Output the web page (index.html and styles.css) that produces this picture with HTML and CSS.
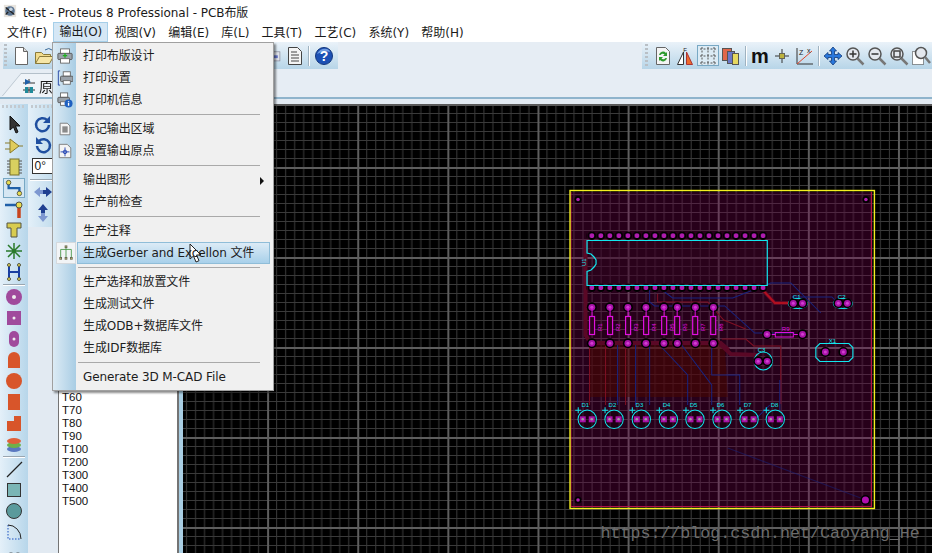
FILE: index.html
```html
<!DOCTYPE html>
<html lang="zh">
<head>
<meta charset="utf-8">
<title>test - Proteus 8 Professional - PCB布版</title>
<link rel="stylesheet" href="styles.css">
</head>
<body>
<div class="app">
  <header class="titlebar">
    <svg class="app-icon" viewBox="0 0 16 16"><rect x="1" y="1" width="14" height="14" fill="#e8e4de"/><circle cx="8" cy="8" r="5.500" fill="#5a7390"/><path d="M3 4l10 8M3 12l3-3" stroke="#222" stroke-width="1.500"/><circle cx="9" cy="6" r="2" fill="#c5d3e0"/></svg>
    <span>test - Proteus 8 Professional - PCB布版</span>
  </header>
  <nav class="menubar">
    <span class="menu-item">文件(F)</span>
    <span class="menu-item is-open">输出(O)</span>
    <span class="menu-item">视图(V)</span>
    <span class="menu-item">编辑(E)</span>
    <span class="menu-item">库(L)</span>
    <span class="menu-item">工具(T)</span>
    <span class="menu-item">工艺(C)</span>
    <span class="menu-item">系统(Y)</span>
    <span class="menu-item">帮助(H)</span>
  </nav>
  <div class="toolrow">
    <div class="toolbar toolbar-file">
      <i class="grip"></i>
      <svg class="tool" viewBox="0 0 20 20"><path d="M4.500 1.500h8l4 4v13h-12z" fill="#fff" stroke="#666"/><path d="M12.500 1.500v4h4" fill="#ddd" stroke="#666"/></svg>
      <svg class="tool" viewBox="0 0 20 20"><path d="M1.500 17.500v-11h6l2 2h7v2" fill="#f2dc8c" stroke="#8a7a3a"/><path d="M1.500 17.500l4-7h14l-4 7z" fill="#f6e6a6" stroke="#8a7a3a"/><path d="M11 4q4-3 7 0" fill="none" stroke="#3a6a9a"/></svg>
      <span class="spacer"></span>
      <svg class="tool tool-narrow" viewBox="0 0 20 20"><rect x="3" y="4" width="14" height="13" fill="#dfe3ea" stroke="#889"/><rect x="6" y="9" width="8" height="4" fill="#6677cc"/></svg>
      <svg class="tool" viewBox="0 0 20 20"><path d="M3.500 1.500h9l4 4v13h-13z" fill="#f4f4f4" stroke="#444"/><path d="M6 6h6M6 9h8M6 12h8M6 15h8" stroke="#444"/></svg>
      <i class="vsep"></i>
      <svg class="tool tool-help" viewBox="0 0 20 20"><circle cx="10" cy="10" r="8.500" fill="#1c50b4" stroke="#12367c"/><path d="M3 8q3-6 10-5 3 1 3 3-6-2-13 2z" fill="#6f9be0"/><text x="10" y="15" class="help-mark">?</text></svg>
    </div>
    <div class="toolbar toolbar-view">
      <i class="grip"></i>
      <svg class="tool" viewBox="0 0 20 20"><path d="M3.500 1.500h9l4 4v13h-13z" fill="#f4f4f4" stroke="#666"/><path d="M6 9a4 4 0 0 1 7-2l1-1v4h-4l1.500-1.500a2.500 2.500 0 0 0-4 .5zM14 12a4 4 0 0 1-7 2l-1 1v-4h4l-1.500 1.500a2.500 2.500 0 0 0 4-.5z" fill="#2e9a2e"/></svg>
      <svg class="tool" viewBox="0 0 20 20"><path d="M8.500 6v12.500h-6z" fill="#fff" stroke="#333"/><path d="M11.500 6v12.500h6z" fill="#ee6a2c" stroke="#a33"/><text x="10" y="6" class="flip-mark">F</text></svg>
      <span class="tool-active"><svg class="tool" viewBox="0 0 20 20"><path d="M2 3h16M2 10h16M2 17h16M4 1v18M10 1v18M16 1v18" stroke="#555" stroke-dasharray="2 1.500"/></svg></span>
      <svg class="tool" viewBox="0 0 20 20"><rect x="1.500" y="2.500" width="9" height="12" fill="#e0664a" stroke="#555"/><rect x="6.500" y="5.500" width="7" height="12" fill="#6c78c8" stroke="#555"/><rect x="11.500" y="7.500" width="6" height="11" fill="#e6d860" stroke="#555"/></svg>
      <i class="vsep"></i>
      <span class="tool-m">m</span>
      <svg class="tool" viewBox="0 0 20 20"><path d="M3 10h14M10 3v14" stroke="#333"/><rect x="7.500" y="7.500" width="5" height="5" fill="#bcb23e" stroke="#665"/></svg>
      <svg class="tool" viewBox="0 0 20 20"><path d="M3 2v16h16" fill="none" stroke="#333"/><path d="M3 18L18 5" stroke="#e0452a"/><text x="5" y="9" class="axis-mark">Z</text><text x="13" y="7" class="axis-mark">x</text></svg>
      <i class="vsep"></i>
      <svg class="tool" viewBox="0 0 20 20"><path d="M10 1l3.500 4H11.500v3.500H15V6.500l4 3.500-4 3.500v-2h-3.500V15h2L10 19l-3.500-4h2v-3.500H5v2L1 10l4-3.500v2h3.500V5h-2z" fill="#2a78dc" stroke="#123a78" stroke-width=".8"/></svg>
      <svg class="tool" viewBox="0 0 20 20"><circle cx="8" cy="8" r="6" fill="#e4e8ee" stroke="#555" stroke-width="1.500"/><path d="M12.500 12.500l6 6" stroke="#777" stroke-width="2.500"/><path d="M4.500 8h7M8 4.500v7" stroke="#333" stroke-width="1.500"/></svg>
      <svg class="tool" viewBox="0 0 20 20"><circle cx="8" cy="8" r="6" fill="#e4e8ee" stroke="#555" stroke-width="1.500"/><path d="M12.500 12.500l6 6" stroke="#777" stroke-width="2.500"/><path d="M4.500 8h7" stroke="#333" stroke-width="1.500"/></svg>
      <svg class="tool" viewBox="0 0 20 20"><circle cx="8" cy="8" r="6" fill="#e4e8ee" stroke="#555" stroke-width="1.500"/><path d="M12.500 12.500l6 6" stroke="#777" stroke-width="2.500"/><rect x="5" y="5" width="6" height="6" fill="none" stroke="#444" stroke-width="1.500"/></svg>
      <svg class="tool" viewBox="0 0 20 20"><rect x="1.500" y="5.500" width="11" height="13" fill="#fff" stroke="#333" stroke-dasharray="1 1"/><circle cx="10" cy="7" r="5.500" fill="#e4e8ee" stroke="#555" stroke-width="1.500"/><path d="M14 11l5 6" stroke="#777" stroke-width="2.500"/></svg>
    </div>
  </div>
  <div class="tabrow">
    <div class="tab-wrap">
      <div class="tab">
        <svg class="tab-icon" viewBox="0 0 14 16"><path d="M1 5h12M7 1v3M1 12h12M7 9v6" stroke="#333"/><path d="M3 1l6 3-6 3z" fill="#1f5fa8"/><rect x="3" y="9" width="3" height="6" fill="#1f8a9a"/><rect x="8" y="9" width="3" height="6" fill="#1f8a9a"/></svg>
        <span>原理图</span>
      </div>
    </div>
  </div>
  <main class="workspace">
    <aside class="mode-bar">
      <i class="grip-h"></i>
      <svg class="mode" viewBox="0 0 20 20"><path d="M6 1v14l3.500-3 2.500 6 2-1-2.500-6H16z" fill="#333" stroke="#111"/></svg>
      <svg class="mode" viewBox="0 0 20 20"><path d="M6 3v14l9-7z" fill="#e0cc5c" stroke="#887a2a"/><path d="M1 7h5M1 13h5M15 10h4" stroke="#887a2a"/></svg>
      <svg class="mode" viewBox="0 0 20 20"><rect x="6" y="2" width="9" height="16" fill="#d8d060" stroke="#77702a"/><path d="M3 4h3M3 7h3M3 10h3M3 13h3M3 16h3M15 4h3M15 7h3M15 10h3M15 13h3M15 16h3" stroke="#555"/></svg>
      <span class="mode-active"><svg class="mode" viewBox="0 0 20 20"><path d="M4 4v6h12v6" fill="none" stroke="#1f5fa8" stroke-width="2.500"/><circle cx="4" cy="4" r="2.500" fill="#e8dc50" stroke="#554"/><circle cx="16" cy="16" r="2.500" fill="#e8dc50" stroke="#554"/></svg></span>
      <svg class="mode" viewBox="0 0 20 20"><path d="M1 6h12" stroke="#1f5fa8" stroke-width="2.500"/><path d="M15 8v11" stroke="#c8441e" stroke-width="3.500"/><circle cx="15" cy="6" r="3" fill="#e8dc50" stroke="#554"/></svg>
      <svg class="mode" viewBox="0 0 20 20"><path d="M3 3h14v5h-4v9H7V8H3z" fill="#d8cc50" stroke="#554"/></svg>
      <svg class="mode" viewBox="0 0 20 20"><path d="M10 2v16M2 10h16M4 4l12 12M16 4L4 16" stroke="#2a7a2a" stroke-width="1.500"/></svg>
      <svg class="mode" viewBox="0 0 20 20"><path d="M5 4v12M15 4v12M5 10h10" stroke="#1a3fa0" stroke-width="2"/><circle cx="5" cy="3" r="1.500" fill="#e8dc50" stroke="#554"/><circle cx="15" cy="3" r="1.500" fill="#e8dc50" stroke="#554"/><circle cx="5" cy="17" r="1.500" fill="#e8dc50" stroke="#554"/><circle cx="15" cy="17" r="1.500" fill="#e8dc50" stroke="#554"/></svg>
      <i class="hsep"></i>
      <svg class="mode" viewBox="0 0 20 20"><circle cx="10" cy="10" r="8" fill="#a04a9c"/><circle cx="10" cy="10" r="2" fill="#eee"/></svg>
      <svg class="mode" viewBox="0 0 20 20"><rect x="3" y="3" width="14" height="14" fill="#a04a9c"/><circle cx="10" cy="10" r="1.500" fill="#eee"/></svg>
      <svg class="mode" viewBox="0 0 20 20"><rect x="5" y="2" width="10" height="16" rx="5" fill="#a04a9c"/><circle cx="10" cy="10" r="1.500" fill="#eee"/></svg>
      <svg class="mode" viewBox="0 0 20 20"><path d="M4 18V8a6 6 0 0 1 12 0v10z" fill="#d8552a"/></svg>
      <svg class="mode" viewBox="0 0 20 20"><circle cx="10" cy="10" r="8" fill="#d8552a"/></svg>
      <svg class="mode" viewBox="0 0 20 20"><rect x="4" y="2" width="12" height="16" fill="#d8552a"/></svg>
      <svg class="mode" viewBox="0 0 20 20"><path d="M3 18V8h7V3h7v15z" fill="#d8552a"/></svg>
      <svg class="mode" viewBox="0 0 20 20"><ellipse cx="10" cy="15" rx="7" ry="3" fill="#5a78c0"/><ellipse cx="10" cy="11" rx="7" ry="3" fill="#6fb04a"/><ellipse cx="10" cy="7" rx="7" ry="3" fill="#e0603a"/></svg>
      <i class="hsep"></i>
      <svg class="mode" viewBox="0 0 20 20"><path d="M3 18L18 3" stroke="#222" stroke-width="1.200"/></svg>
      <svg class="mode" viewBox="0 0 20 20"><rect x="3.500" y="3.500" width="13" height="13" fill="#7ab5b5" stroke="#333"/></svg>
      <svg class="mode" viewBox="0 0 20 20"><circle cx="10" cy="10" r="7.500" fill="#5a9a9c" stroke="#333"/></svg>
      <svg class="mode" viewBox="0 0 20 20"><path d="M4 3v14h13" fill="none" stroke="#1a4fc0" stroke-dasharray="1.500 1.500"/><path d="M4 3a13 14 0 0 1 13 14" fill="none" stroke="#222"/></svg>
      <svg class="mode" viewBox="0 0 20 20"><path d="M3 18q-2-8 4-8 3 0 3 2 1-2 4-2 5 0 3 8z" fill="#5a9a9c" stroke="#333"/></svg>
    </aside>
    <aside class="side-panel">
      <div class="orient-bar">
        <i class="grip-h"></i>
        <svg class="mode" viewBox="0 0 20 20"><path d="M16 10a6.500 6.500 0 1 1-2-5" fill="none" stroke="#1f4fa0" stroke-width="2.500"/><path d="M17 1v7h-7z" fill="#1f4fa0"/></svg>
        <svg class="mode" viewBox="0 0 20 20"><path d="M4 10a6.500 6.500 0 1 0 2-5" fill="none" stroke="#1f4fa0" stroke-width="2.500"/><path d="M3 1v7h7z" fill="#1f4fa0"/></svg>
        <div class="angle">0°</div>
        <i class="hsep hsep-wide"></i>
        <svg class="mode" viewBox="0 0 20 20"><path d="M1 10l6-5v3h3v4H7v3z" fill="#7d97d0"/><path d="M19 10l-6-5v3h-3v4h3v3z" fill="#1f3f90"/></svg>
        <svg class="mode" viewBox="0 0 20 20"><path d="M10 1l-5 6h3v3h4V7h3z" fill="#1f3f90"/><path d="M10 19l-5-6h3v-3h4v3h3z" fill="#7d97d0"/></svg>
      </div>
      <ul class="list">
        <li>T60</li><li>T70</li><li>T80</li><li>T90</li><li>T100</li><li>T200</li><li>T300</li><li>T400</li><li>T500</li>
      </ul>
    </aside>
    <svg class="canvas" viewBox="184 104 748 449" preserveAspectRatio="none">
      <defs>
        <pattern id="grid" patternUnits="userSpaceOnUse" x="628" y="437" width="90" height="90">
          <path d="M.500 0v90M9.500 0v90M18.500 0v90M27.500 0v90M36.500 0v90M45.500 0v90M54.500 0v90M63.500 0v90M72.500 0v90M81.500 0v90M0 .500h90M0 9.500h90M0 18.500h90M0 27.500h90M0 36.500h90M0 45.500h90M0 54.500h90M0 63.500h90M0 72.500h90M0 81.500h90" stroke="#3a3a3a" fill="none"/>
          <path d="M1 0v90M0 1h90" stroke="#5e5e5e" stroke-width="2" fill="none"/>
        </pattern>
        <pattern id="padrow" patternUnits="userSpaceOnUse" x="587.300" y="229" width="9" height="13">
          <circle cx="5" cy="6.700" r="4.200" fill="#000"/><circle cx="5" cy="6.700" r="2.400" fill="#b01cb0"/>
        </pattern>
        <g id="pad"><circle r="5" fill="#000"/><circle r="3.400" fill="#a812a8"/><circle r="1.500" fill="#d040d0"/></g>
        <g id="res"><path d="M0-9v27" stroke="#e010e0"/><rect x="-2.500" y="0" width="5" height="18" fill="#30041f" stroke="#e010e0" stroke-width="1.200"/></g>
        <g id="led">
          <circle r="9.200" fill="#000" fill-opacity=".25" stroke="#12e6ee"/>
          <path d="M-12-9h6M-9-12v6" stroke="#12e6ee"/>
          <rect x="-7.500" y="-3" width="6" height="6" fill="#a812a8"/><rect x="1.500" y="-3" width="6" height="6" fill="#a812a8"/>
          <circle cx="-4.500" r="1.300" fill="#a0a0a0"/><circle cx="4.500" r="1.300" fill="#a0a0a0"/>
        </g>
      </defs>
      <rect x="184" y="104" width="748" height="449" fill="#000"/>
      <rect x="184" y="104" width="748" height="449" fill="url(#grid)"/>
      <rect x="184" y="104" width="748" height="2" fill="#5a5a5a"/>
      <rect x="572" y="192" width="300" height="315" fill="#7a0050" fill-opacity=".32"/>
      <path d="M590 345h135l3 52H590z" fill="#4a0800" fill-opacity=".55"/>
      <path d="M572 506.500h300M571.500 192v315" stroke="#b0104a" fill="none"/>
      <path d="M871.500 192v315" stroke="#c0104a"/>
      <rect x="570.500" y="190.500" width="304" height="318" fill="none" stroke="#f4f020" stroke-width="1.400"/>
      <g fill="none" stroke="#5a0826" stroke-width="4">
        <path d="M586 240v95l5 8h130l8 7"/>
        <path d="M763 290l12 13h18"/>
        <path d="M716 340l15 14 28 1"/>
      </g>
      <g fill="none" stroke="#b01020" stroke-width="2">
        <path d="M763 290l12 13h18"/>
      </g>
      <g fill="none" stroke="#801024" stroke-width="1">
        <path d="M658 294v8h50l16 18 22 9"/>
        <path d="M722 339h24l8 7h27v58"/>
        <path d="M590 345v60M606 345v60M626 345v60"/>
      </g>
      <g fill="none" stroke="#182480" stroke-width="1">
        <path d="M650 290v12l5 4h70l30 27h40"/>
        <path d="M665 292l8 6h60l38-15h20l30 30"/>
        <path d="M618 345v60M636 345v60M650 345v60M660 345l28 30v30M682 345l30 40v20M712 345v30h28v30"/>
        <path d="M770 405l-14 14M780 380v30M792 297h40l10 10"/>
        <path d="M728 448L866 500" stroke-opacity=".5"/>
      </g>
      <rect x="587" y="229" width="180" height="13" fill="url(#padrow)"/>
      <rect x="587" y="283" width="180" height="13" fill="url(#padrow)"/>
      <path d="M587.500 253v-12.500h180v45h-180V271.500l4-1.500 3-3 2-3v-4l-2-3-3-3-4-1z" fill="#30041f" fill-opacity=".4" stroke="#12e6ee" stroke-width="1.200"/>
      <text class="lbl lbl-cyan" transform="translate(586 266) rotate(-90)">U1</text>
      <g>
        <use href="#pad" x="592.300" y="307.300"/><use href="#pad" x="610.300" y="307.300"/><use href="#pad" x="628.300" y="307.300"/><use href="#pad" x="646.300" y="307.300"/><use href="#pad" x="664.300" y="307.300"/><use href="#pad" x="677.700" y="307.300"/><use href="#pad" x="695.700" y="307.300"/><use href="#pad" x="713.700" y="307.300"/>
        <use href="#pad" x="592.300" y="343.300"/><use href="#pad" x="610.300" y="343.300"/><use href="#pad" x="628.300" y="343.300"/><use href="#pad" x="646.300" y="343.300"/><use href="#pad" x="664.300" y="343.300"/><use href="#pad" x="677.700" y="343.300"/><use href="#pad" x="695.700" y="343.300"/><use href="#pad" x="713.700" y="343.300"/>
        <use href="#res" x="592.500" y="316.500"/><use href="#res" x="610.500" y="316.500"/><use href="#res" x="628.500" y="316.500"/><use href="#res" x="646.500" y="316.500"/><use href="#res" x="664.500" y="316.500"/><use href="#res" x="677.500" y="316.500"/><use href="#res" x="695.500" y="316.500"/><use href="#res" x="713.500" y="316.500"/>
      </g>
      <text class="lbl lbl-magenta" transform="translate(602 331) rotate(-90)">R1</text>
      <text class="lbl lbl-magenta" transform="translate(620 331) rotate(-90)">R2</text>
      <text class="lbl lbl-magenta" transform="translate(638 331) rotate(-90)">R3</text>
      <text class="lbl lbl-magenta" transform="translate(656 331) rotate(-90)">R4</text>
      <text class="lbl lbl-magenta" transform="translate(674 331) rotate(-90)">R5</text>
      <text class="lbl lbl-magenta" transform="translate(687 331) rotate(-90)">R6</text>
      <text class="lbl lbl-magenta" transform="translate(705 331) rotate(-90)">R7</text>
      <text class="lbl lbl-magenta" transform="translate(723 331) rotate(-90)">R8</text>
      <use href="#pad" x="767.300" y="334.300"/><use href="#pad" x="802.700" y="334.300"/>
      <path d="M772 334.500h3.500M794 334.500h4" stroke="#e010e0"/>
      <rect x="775.500" y="332.500" width="18" height="4.500" fill="none" stroke="#e010e0"/>
      <text class="lbl lbl-magenta" x="782" y="331">R9</text>
      <g fill="none" stroke="#12e6ee" stroke-width="1.100">
        <ellipse cx="798" cy="303.500" rx="9.500" ry="5"/>
        <ellipse cx="843" cy="303.500" rx="9.500" ry="5"/>
        <path d="M820 343.500h29l4 4v10l-4 4h-29l-4-4v-10z"/>
        <circle cx="763.500" cy="361" r="9"/>
      </g>
      <g>
        <use href="#pad" x="793.500" y="303.300"/><use href="#pad" x="802.700" y="303.300"/>
        <use href="#pad" x="838.500" y="303.300"/><use href="#pad" x="847.500" y="303.300"/>
        <use href="#pad" x="825.500" y="352"/><use href="#pad" x="843.500" y="352"/>
        <use href="#pad" x="758.500" y="361.300"/><use href="#pad" x="767.500" y="361.300"/>
      </g>
      <text class="lbl lbl-cyan" x="793" y="299">C1</text>
      <text class="lbl lbl-cyan" x="838" y="299">C2</text>
      <text class="lbl lbl-cyan" x="829" y="343">X1</text>
      <text class="lbl lbl-cyan" x="758" y="352">C3</text>
      <g>
        <use href="#led" x="587.700" y="419.300"/><use href="#led" x="614.500" y="419.300"/><use href="#led" x="641.700" y="419.300"/><use href="#led" x="668.700" y="419.300"/><use href="#led" x="695.300" y="419.300"/><use href="#led" x="722.300" y="419.300"/><use href="#led" x="749.300" y="419.300"/><use href="#led" x="775.500" y="419.300"/>
      </g>
      <text class="lbl lbl-cyan" x="582" y="407">D1</text><text class="lbl lbl-cyan" x="609" y="407">D2</text><text class="lbl lbl-cyan" x="636" y="407">D3</text><text class="lbl lbl-cyan" x="663" y="407">D4</text><text class="lbl lbl-cyan" x="690" y="407">D5</text><text class="lbl lbl-cyan" x="717" y="407">D6</text><text class="lbl lbl-cyan" x="744" y="407">D7</text><text class="lbl lbl-cyan" x="771" y="407">D8</text>
      <g>
        <circle cx="578.500" cy="199.500" r="3.500" fill="#000"/><circle cx="578.500" cy="199.500" r="1.800" fill="#b020b0"/>
        <circle cx="866" cy="199.500" r="3.500" fill="#000"/><circle cx="866" cy="199.500" r="1.800" fill="#b020b0"/>
        <circle cx="578.500" cy="500" r="3.500" fill="#000"/><circle cx="578.500" cy="500" r="1.800" fill="#b020b0"/>
        <circle cx="865.500" cy="500" r="5" fill="#000"/><circle cx="865.500" cy="500" r="3.500" fill="#b010b0"/>
      </g>
      <text class="watermark" x="601" y="538">https://blog.csdn.net/Caoyang_He</text>
    </svg>
  </main>

  <div class="dropdown">
    <div class="dd-row"><svg class="dd-icon" viewBox="0 0 18 18"><rect x="4" y="1" width="10" height="6" fill="#fff" stroke="#666"/><rect x="1" y="6" width="16" height="7" rx="1" fill="#9aa2aa" stroke="#555"/><rect x="4" y="12" width="10" height="5" fill="#fff" stroke="#666"/><path d="M9 6v5M6.500 8.500h5" stroke="#1cb01c" stroke-width="1.500"/></svg><span>打印布版设计</span></div>
    <div class="dd-row"><svg class="dd-icon" viewBox="0 0 18 18"><path d="M1.500 1v16M1.500 1h2M1.500 17h2" stroke="#1f3fa0" fill="none"/><rect x="7" y="2" width="8" height="5" fill="#fff" stroke="#666"/><rect x="4" y="7" width="14" height="6" rx="1" fill="#9aa2aa" stroke="#555"/><rect x="7" y="12" width="8" height="4" fill="#fff" stroke="#666"/></svg><span>打印设置</span></div>
    <div class="dd-row"><svg class="dd-icon" viewBox="0 0 18 18"><rect x="4" y="1" width="8" height="5" fill="#fff" stroke="#666"/><rect x="1" y="6" width="13" height="6" rx="1" fill="#9aa2aa" stroke="#555"/><rect x="4" y="11" width="8" height="4" fill="#fff" stroke="#666"/><circle cx="13" cy="13" r="4.500" fill="#1f60c0"/><path d="M13 12v3.500M13 10v1" stroke="#fff" stroke-width="1.500"/></svg><span>打印机信息</span></div>
    <i class="dd-sep"></i>
    <div class="dd-row"><svg class="dd-icon" viewBox="0 0 18 18"><path d="M3.500 2.500h8l3 3v10h-11z" fill="#f4f4f4" stroke="#777"/><rect x="6" y="6" width="6" height="7" fill="#8a8a8a"/></svg><span>标记输出区域</span></div>
    <div class="dd-row"><svg class="dd-icon" viewBox="0 0 18 18"><path d="M2.500 1.500h9l4 4v11h-13z" fill="#f4f4f4" stroke="#777"/><path d="M4 10h10M9 5v10" stroke="#1f3fb0"/><circle cx="9" cy="10" r="2" fill="none" stroke="#1f3fb0"/></svg><span>设置输出原点</span></div>
    <i class="dd-sep"></i>
    <div class="dd-row"><span>输出图形</span><i class="dd-arrow"></i></div>
    <div class="dd-row"><span>生产前检查</span></div>
    <i class="dd-sep"></i>
    <div class="dd-row"><span>生产注释</span></div>
    <div class="dd-row is-hot"><span class="dd-icon-box"><svg class="dd-icon" viewBox="0 0 18 18"><path d="M3 15V5h12v10M9 5v10M9 2v3" fill="none" stroke="#4a9a4a"/><rect x="2" y="14" width="2" height="2" fill="#d8d060" stroke="#665"/><rect x="8" y="14" width="2" height="2" fill="#d8d060" stroke="#665"/><rect x="14" y="14" width="2" height="2" fill="#d8d060" stroke="#665"/><rect x="8" y="1" width="2" height="2" fill="#d8d060" stroke="#665"/></svg></span><span>生成Gerber and Excellon 文件</span></div>
    <i class="dd-sep"></i>
    <div class="dd-row"><span>生产选择和放置文件</span></div>
    <div class="dd-row"><span>生成测试文件</span></div>
    <div class="dd-row"><span>生成ODB+数据库文件</span></div>
    <div class="dd-row"><span>生成IDF数据库</span></div>
    <i class="dd-sep"></i>
    <div class="dd-row"><span>Generate 3D M-CAD File</span></div>
  </div>
  <svg class="cursor" viewBox="0 0 12 20"><path d="M1 1v15l3.500-3 2.500 6 3-1.300-2.500-5.700H12z" fill="#fff" stroke="#222"/></svg>
</div>
</body>
</html>
```

FILE: styles.css
```css
* { box-sizing: border-box; }
html, body { margin: 0; height: 100%; overflow: hidden; background: #fff; }
.app {
  position: relative;
  width: 932px;
  height: 553px;
  display: flex;
  flex-direction: column;
  overflow: hidden;
  font: 12px "DejaVu Sans", "Noto Sans CJK SC", sans-serif;
  color: #1a1a1a;
}
i { display: block; font-style: normal; }

.titlebar { height: 22px; display: flex; align-items: center; gap: 6px; padding-left: 3px; background: #fff; letter-spacing: -.05px; }
.app-icon { width: 14px; height: 14px; flex: none; }

.menubar { height: 20px; display: flex; padding-left: .9px; background: #fff; }
.menu-item { padding: 0 6.100px; line-height: 20px; border: solid transparent; border-width: 1px 0; white-space: nowrap; }
.menu-item.is-open { background: #d5e7f5; border: 1px solid #a6cfe9; line-height: 18px; padding: 0 5.100px; }

.toolrow { height: 27px; display: flex; justify-content: space-between; background: #e6edf4; }
.toolbar {
  height: 27px;
  display: flex;
  align-items: center;
  background: linear-gradient(#eaf2f9, #b7d5e8);
}
.toolbar-file { margin-left: 3px; width: 335px; padding-left: 7px; gap: 3px; padding-right: 4px; }
.toolbar-view { width: 290px; padding-left: 1px; gap: 2px; }
.grip { width: 3px; height: 24px; margin: 0 3px 0 2px; background: repeating-linear-gradient(#b9bfc5 0 2px, transparent 2px 4px); flex: none; }
.toolbar-file .grip { margin: 0 1px 0 -6px; }
.tool { width: 20px; height: 20px; flex: none; }
.tool-narrow { width: 14px; }
.tool-help { margin-left: 1px; }
.spacer { flex: 1; }
.vsep { width: 1px; height: 20px; margin: 0 2px; background: #9fb2c0; box-shadow: 1px 0 #fff; flex: none; }
.toolbar-file .vsep { margin: 0 1px 0 0; }
.tool-active { width: 22px; height: 21px; display: flex; align-items: center; justify-content: center; background: #dcebf5; border: 1px solid #78a8c4; flex: none; }
.tool-m { width: 20px; text-align: center; font: bold 20px/20px "Liberation Sans", sans-serif; color: #111; flex: none; }
.help-mark { font: bold 14px "Liberation Sans", sans-serif; fill: #fff; text-anchor: middle; }
.flip-mark { font: 6px "Liberation Sans", sans-serif; fill: #222; text-anchor: middle; }
.axis-mark { font: 7px "Liberation Sans", sans-serif; fill: #222; }

.tabrow { height: 30px; background: #e6edf4; border-bottom: 2px solid #8fb4cc; padding-top: 5px; overflow: hidden; }
.tab-wrap { width: 60px; filter: drop-shadow(0 -1px 0 #b4c0ca); }
.tab {
  height: 23px;
  padding-left: 22px;
  display: flex;
  align-items: center;
  gap: 3px;
  font-size: 14px;
  white-space: nowrap;
  background: #eef3f8;
  clip-path: polygon(2px 100%, 21px 0, 100% 0, 100% 100%);
}
.tab-icon { width: 14px; height: 16px; flex: none; }

.workspace { flex: 1; display: flex; min-height: 0; padding-top: 5px; background: #e2eaf2; }
.mode-bar {
  width: 28px;
  flex: none;
  display: flex;
  flex-direction: column;
  align-items: center;
  background: linear-gradient(90deg, #e4f0f9, #b7d6ea);
}
.grip-h { width: 24px; height: 3px; margin: 1px 0 6px; flex: none; background: repeating-linear-gradient(90deg, #c3c9cf 0 2px, transparent 2px 4px); }
.mode { width: 20px; height: 20px; flex: none; margin: .5px 0; }
.mode-active { width: 22px; height: 20px; display: flex; align-items: center; justify-content: center; background: #d6e7f3; border: 1px solid #78a8c4; flex: none; margin: .5px 0; }
.mode-active .mode { width: 18px; height: 18px; margin: 0; }
.hsep { width: 22px; height: 1px; margin: 2px 0 1px; background: #9aa6b0; box-shadow: 0 1px #fff; flex: none; }
.hsep-wide { width: 26px; margin: 5px 0 1px; }

.side-panel { width: 155px; flex: none; position: relative; display: flex; padding-right: 4px; background: linear-gradient(90deg, #e2eaf2 150px, #a8cde2 150px); }
.orient-bar {
  width: 30px;
  height: 123px;
  flex: none;
  display: flex;
  flex-direction: column;
  align-items: center;
  background: linear-gradient(90deg, #e4f0f9, #bcd9eb);
}
.angle { width: 26px; height: 16px; margin: 2px 0 0 3px; padding-left: 2px; font: 12px/15px "Liberation Sans", sans-serif; background: #fff; border: 1px solid #333; border-width: 1px 0 1px 1px; flex: none; }
.list {
  list-style: none;
  margin: 0;
  padding: 287px 0 0 3px;
  flex: 1;
  background: #fff;
  border: solid #747474;
  border-width: 0 2px 0 1px;
  font: 11.500px/13px "Liberation Sans", sans-serif;
  color: #111;
}
.canvas { flex: 1; min-width: 0; height: 449px; display: block; background: #000; }
.lbl { font: 6px "Liberation Sans", sans-serif; }
.lbl-cyan { fill: #12e6ee; }
.lbl-magenta { fill: #e010e0; }
.watermark { font: 16.600px "Liberation Mono", monospace; fill: #6c6c6c; }

.dropdown {
  position: absolute;
  left: 52px;
  top: 42px;
  width: 222px;
  height: 349px;
  padding: 2px 1px;
  background: linear-gradient(90deg, #dcebf5 0, #a9cde4 23px, #f0f0f0 23px);
  border: 1px solid #a0a0a0;
  box-shadow: 2px 2px 2px rgba(0, 0, 0, .45);
  color: #1c1c1c;
  letter-spacing: -.1px;
}
.dd-row { position: relative; height: 22px; padding-left: 29px; line-height: 23px; white-space: nowrap; }
.dd-icon { position: absolute; left: 3px; top: 3px; width: 16px; height: 16px; }
.dd-icon-box { position: absolute; left: 2px; top: 0; width: 20px; height: 22px; background: #f2f4f6; border: 1px solid #d5d9dd; }
.dd-icon-box .dd-icon { left: 1px; top: 2px; }
.is-hot::after {
  content: "";
  position: absolute;
  z-index: 0;
  left: 23px;
  right: 2px;
  top: 0;
  bottom: 0;
  background: linear-gradient(#dcebf6, #a8d0ea);
  border: 1px solid #8fbdd8;
}
.is-hot > span:last-child { position: relative; z-index: 1; }
.dd-sep { height: 7px; margin: 0 12px 0 24px; background: linear-gradient(#a9a9a9, #a9a9a9) center / 100% 1px no-repeat; }
.dd-arrow { position: absolute; right: 8px; top: 8px; border-left: 4px solid #111; border-top: 4px solid transparent; border-bottom: 4px solid transparent; }
.cursor { position: absolute; left: 189px; top: 243px; width: 12px; height: 20px; }
```
